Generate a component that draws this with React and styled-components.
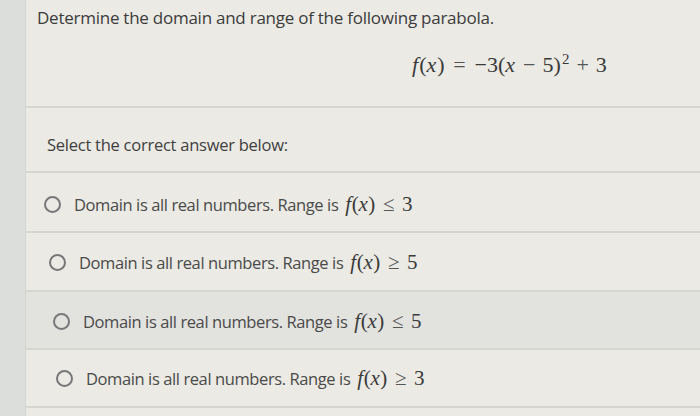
import React from "react";
import styled, { createGlobalStyle } from "styled-components";

const Global = createGlobalStyle`
  html, body { margin: 0; padding: 0; }
  body {
    width: 700px;
    height: 416px;
    overflow: hidden;
    background: #ebeae4;
    font-family: "Open Sans", "Noto Sans", sans-serif;
  }
`;

const Page = styled.div`
  display: flex;
  width: 700px;
  height: 416px;
  background: #ebeae4;
`;

const Strip = styled.div`
  width: 25px;
  flex: none;
  background: #dcdedb;
  border-right: 1px solid #d4d6d2;
`;

const Main = styled.div`
  flex: 1;
  display: flex;
  flex-direction: column;
`;

const Header = styled.div`
  height: 108px;
  box-sizing: border-box;
  padding: 6px 0 0 11px;
  border-bottom: 2px solid #d6d6d0;
`;

const Title = styled.div`
  font-size: 17px;
  color: #3c3c3c;
  letter-spacing: -0.25px;
  line-height: 24px;
`;

const FormulaLine = styled.div`
  display: flex;
  padding-left: 375px;
  margin-top: 22px;
`;

const Math = styled.span`
  font-family: "Liberation Serif", "DejaVu Serif", serif;
  font-size: ${(p) => p.size || 21}px;
  color: #3a3a3a;
  white-space: nowrap;
  i { font-style: italic; margin-right: 1px; }
  sup { font-size: 0.68em; vertical-align: 0.55em; line-height: 0; margin-left: 1px; }
`;

const Op = styled.span`
  margin: 0 ${(p) => p.gap || 0.28}em;
  color: #555;
`;

const Prompt = styled.div`
  height: 65px;
  box-sizing: border-box;
  display: flex;
  align-items: center;
  padding: 10px 0 0 21px;
  border-bottom: 2px solid #d6d6d0;
  font-size: 16.5px;
  letter-spacing: -0.25px;
  color: #3f3f3f;
`;

const Option = styled.label`
  height: ${(p) => p.h}px;
  box-sizing: border-box;
  display: flex;
  align-items: center;
  gap: 13px;
  padding-left: ${(p) => p.indent}px;
  padding-top: ${(p) => p.shift || 0}px;
  background: ${(p) => (p.hover ? "#e2e2de" : "transparent")};
  border-bottom: 2px solid #d6d6d0;
  font-size: 16.5px;
  letter-spacing: -0.4px;
  color: #4a4a4a;
`;

const Radio = styled.span`
  width: 13px;
  height: 13px;
  flex: none;
  border-radius: 50%;
  border: 2px solid #77787a;
`;

const Text = styled.span`
  display: flex;
  align-items: baseline;
  gap: 7px;
`;

const options = [
  { op: "≤", n: "3", indent: 18, h: 60, shift: 4 },
  { op: "≥", n: "5", indent: 23, h: 59, shift: 2 },
  { op: "≤", n: "5", indent: 27, h: 58, shift: 3, hover: true },
  { op: "≥", n: "3", indent: 30, h: 58, shift: 0 },
];

export default function App() {
  return (
    <>
      <Global />
      <Page>
        <Strip />
        <Main>
          <Header>
            <Title>Determine the domain and range of the following parabola.</Title>
            <FormulaLine>
              <Math size={22}>
                <i>f</i>(<i>x</i>)<Op gap={0.4}>=</Op>−3(<i>x</i>
                <Op gap={0.32}>−</Op>5)<sup>2</sup>
                <Op gap={0.32}>+</Op>3
              </Math>
            </FormulaLine>
          </Header>
          <Prompt>Select the correct answer below:</Prompt>
          {options.map((o, i) => (
            <Option key={i} indent={o.indent} h={o.h} shift={o.shift} hover={o.hover}>
              <Radio />
              <Text>
                Domain is all real numbers. Range is
                <Math size={21}>
                  <i>f</i>(<i>x</i>)<Op gap={0.38}>{o.op}</Op>
                  {o.n}
                </Math>
              </Text>
            </Option>
          ))}
        </Main>
      </Page>
    </>
  );
}
